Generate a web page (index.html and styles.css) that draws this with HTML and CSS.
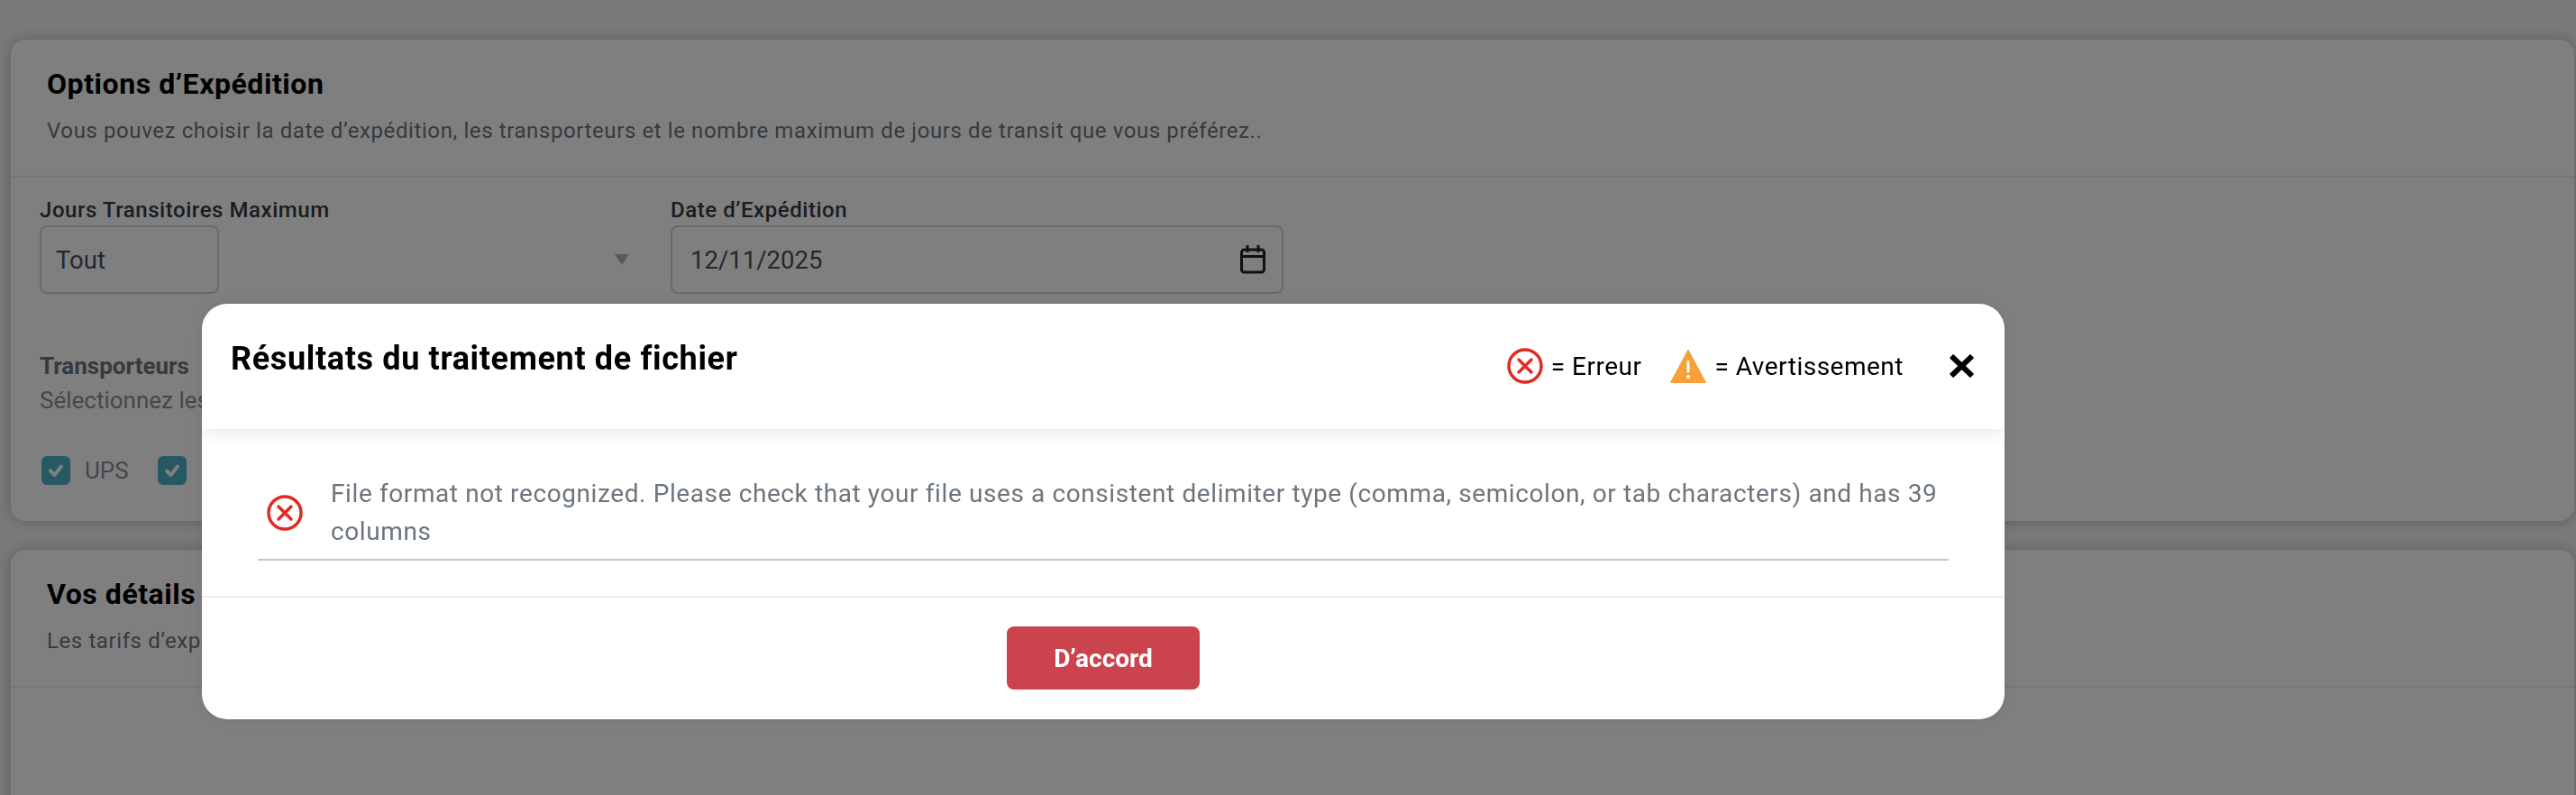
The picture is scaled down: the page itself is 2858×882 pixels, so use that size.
FILE: index.html
```html
<!DOCTYPE html>
<html lang="fr">
<head>
	<meta charset="UTF-8">
	<title>Options d’Expédition</title>
	<link rel="stylesheet" href="styles.css">
</head>
<body>
	<div class="page">
		<section class="card card-options">
			<div class="card-head">
				<h2>Options d’Expédition</h2>
				<p>Vous pouvez choisir la date d’expédition, les transporteurs et le nombre maximum de jours de transit que vous préférez..</p>
			</div>
			<div class="card-body">
				<div class="fields">
					<div class="field field-transit">
						<label>Jours Transitoires Maximum</label>
						<div class="select-row">
							<div class="input select-box">Tout</div>
							<span class="caret"></span>
						</div>
					</div>
					<div class="field field-date">
						<label>Date d’Expédition</label>
						<div class="input date-box">
							<span>12/11/2025</span>
							<svg class="icon-calendar" viewBox="0 0 28 32" fill="none" stroke="#202124" stroke-width="3">
								<rect x="1.5" y="5" width="25" height="25" rx="3"/>
								<path d="M1.5 12.5h25M8 0v8M20 0v8"/>
							</svg>
						</div>
					</div>
				</div>
				<h3 class="carriers-title">Transporteurs</h3>
				<p class="carriers-hint">Sélectionnez les transporteurs que vous souhaitez inclure.</p>
				<div class="carriers">
					<div class="carrier">
						<span class="check"><svg viewBox="0 0 32 32" fill="none" stroke="#fff" stroke-width="4" stroke-linecap="round" stroke-linejoin="round"><path d="M10 16.5l4.5 4.5L22 11.500"/></svg></span>
						<span>UPS</span>
					</div>
					<div class="carrier">
						<span class="check"><svg viewBox="0 0 32 32" fill="none" stroke="#fff" stroke-width="4" stroke-linecap="round" stroke-linejoin="round"><path d="M10 16.5l4.5 4.5L22 11.500"/></svg></span>
						<span>FedEx</span>
					</div>
				</div>
			</div>
		</section>
		<section class="card card-details">
			<div class="card-head">
				<h2>Vos détails</h2>
				<p>Les tarifs d’expédition sont calculés à partir de vos détails.</p>
			</div>
		</section>
	</div>

	<div class="overlay">
		<div class="modal">
			<div class="modal-head">
				<h1>Résultats du traitement de fichier</h1>
				<div class="legend">
					<svg class="icon-error" viewBox="0 0 40 40" fill="none" stroke="#e02b20" stroke-width="3.500" stroke-linecap="round">
						<circle cx="20" cy="20" r="18"/>
						<path d="M13 13l14 14M27 13L13 27"/>
					</svg>
					<span class="legend-text">= Erreur</span>
					<svg class="icon-warning" viewBox="0 0 40 38">
						<path d="M20 1L39.500 37.500H.5z" fill="#f5a03a" stroke="#f5a03a" stroke-width="1" stroke-linejoin="round"/>
						<path d="M20 14v11" stroke="#fff" stroke-width="3" stroke-linecap="round"/>
						<circle cx="20" cy="31" r="2" fill="#fff"/>
					</svg>
					<span class="legend-text">= Avertissement</span>
					<svg class="icon-close" viewBox="0 0 27 26" fill="none" stroke="#000" stroke-width="6">
						<path d="M2 2l23 22M25 2L2 24"/>
					</svg>
				</div>
			</div>
			<div class="modal-body">
				<div class="result-row">
					<svg class="icon-error" viewBox="0 0 40 40" fill="none" stroke="#e02b20" stroke-width="3.500" stroke-linecap="round">
						<circle cx="20" cy="20" r="18"/>
						<path d="M13 13l14 14M27 13L13 27"/>
					</svg>
					<p>File format not recognized. Please check that your file uses a consistent delimiter type (comma, semicolon, or tab characters) and has 39 columns</p>
				</div>
			</div>
			<div class="modal-foot">
				<button class="btn-ok">D’accord</button>
			</div>
		</div>
	</div>
</body>
</html>
```

FILE: styles.css
```css
*{margin: 0;padding: 0;box-sizing: border-box;}
html,body{
	height: 100%;
	overflow: hidden;
}
body{
	background: #f4f4f7;
	font-family: Roboto, "Liberation Sans", sans-serif;
}
.page{
	padding: 44px 2px 0 12px;
}
.card{
	background: #fff;
	border-radius: 16px;
	box-shadow: 0 0 16px rgba(0, 0, 0, .25);
	margin-bottom: 32px;
}
.card-options{
	height: 534px;
}
.card-details{
	height: 400px;
}
.card-head{
	height: 153px;
	padding: 30px 40px 0;
	border-bottom: 2px solid #ececf0;
}
.card-head h2{
	font-size: 32px;
	line-height: 38px;
	font-weight: 700;
	color: #000;
	letter-spacing: .55px;
}
.card-head p{
	margin-top: 15px;
	font-size: 24px;
	line-height: 36px;
	color: #6c757d;
	letter-spacing: .6px;
}
.card-body{
	padding: 19px 32px 0;
}
.fields{
	display: flex;
	gap: 32px;
}
.field label{
	display: block;
	font-size: 24px;
	line-height: 34px;
	font-weight: 500;
	color: #343a40;
	letter-spacing: .55px;
}
.field-transit{
	width: 668px;
}
.field-date{
	width: 680px;
}
.select-row{
	display: flex;
	align-items: center;
	justify-content: space-between;
	padding-right: 14px;
}
.input{
	height: 76px;
	border: 2px solid #ced4da;
	border-radius: 8px;
	font-size: 27.500px;
	color: #495057;
	display: flex;
	align-items: center;
}
.select-box{
	width: 199px;
	padding-left: 16px;
	color: #495057;
}
.caret{
	width: 0;
	height: 0;
	border: 8px solid transparent;
	border-top: 12px solid #adb5bd;
	border-bottom: 0;
}
.date-box{
	justify-content: space-between;
	padding: 0 18px 0 20px;
}
.icon-calendar{
	width: 28px;
	height: 32px;
}
.carriers-title{
	margin-top: 62px;
	font-size: 26px;
	line-height: 36px;
	font-weight: 700;
	color: #6c757d;
}
.carriers-hint{
	margin-top: 2px;
	font-size: 26px;
	line-height: 36px;
	color: #8a8f98;
}
.carriers{
	display: flex;
	gap: 32px;
	margin-top: 44px;
	padding-left: 2px;
}
.carrier{
	display: flex;
	align-items: center;
	gap: 16px;
	font-size: 26px;
	color: #8a8f98;
}
.check{
	width: 32px;
	height: 32px;
	border-radius: 6px;
	background: #4eb2c8;
}
.check svg{
	display: block;
}

/* modal */
.overlay{
	position: fixed;
	top: 0;
	right: 0;
	bottom: 0;
	left: 0;
	background: rgba(0, 0, 0, .5);
	display: flex;
	align-items: flex-start;
	padding: 337px 0 0 224px;
}
.modal{
	width: 2000px;
	height: 461px;
	background: #fff;
	border-radius: 28px;
	overflow: hidden;
	box-shadow: 0 0 20px rgba(0, 0, 0, .08);
}
.modal-head{
	height: 139px;
	padding: 0 32px;
	display: flex;
	justify-content: space-between;
	align-items: flex-start;
	box-shadow: 0 2px 20px rgba(30, 30, 70, .12);
	position: relative;
}
.modal-head h1{
	font-size: 36px;
	line-height: 44px;
	font-weight: 700;
	color: #000;
	margin-top: 39px;
	letter-spacing: .65px;
}
.legend{
	display: flex;
	align-items: center;
	margin-top: 49px;
	font-size: 28px;
	color: #000;
}
.icon-error{
	width: 40px;
	height: 40px;
	flex-shrink: 0;
}
.icon-warning{
	width: 40px;
	height: 38px;
	margin-left: 32px;
}
.legend-text{
	margin-left: 9px;
	letter-spacing: .5px;
}
.icon-close{
	width: 27px;
	height: 26px;
	margin-left: 51px;
	margin-right: 2px;
}
.modal-body{
	height: 187px;
	padding: 0 62px;
	border-bottom: 2px solid #ececf1;
}
.result-row{
	height: 146px;
	padding: 46px 0 4px 10px;
	display: flex;
	align-items: center;
	gap: 31px;
	border-bottom: 2px solid #c4c4c8;
}
.result-row p{
	font-size: 28px;
	line-height: 42px;
	color: #6c757d;
	letter-spacing: .6px;
}
.modal-foot{
	display: flex;
	justify-content: center;
	padding-top: 32px;
}
.btn-ok{
	width: 214px;
	height: 70px;
	border: 0;
	border-radius: 8px;
	background: #cb444d;
	color: #fff;
	font: 700 28px Roboto, sans-serif;
}
```
